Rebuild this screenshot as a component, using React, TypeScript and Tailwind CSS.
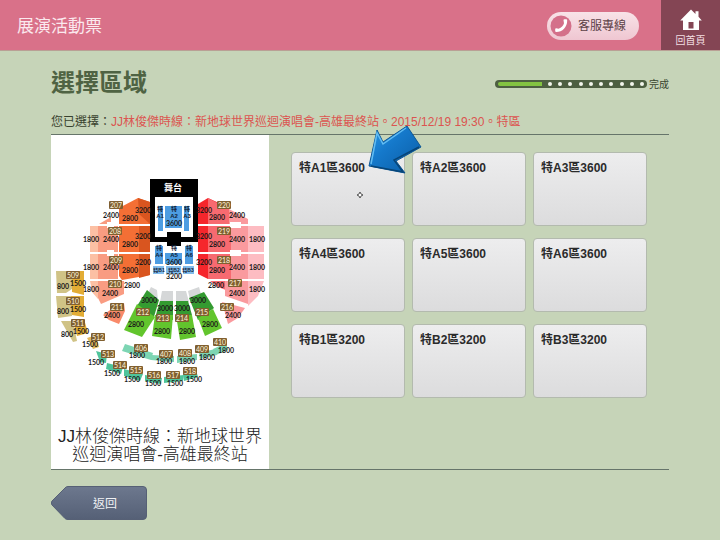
import React from 'react';

type Shape = [fill: string, points: string];
type Label = [text: string, x: number, y: number];

const areas = [
  '特A1區3600', '特A2區3600', '特A3區3600',
  '特A4區3600', '特A5區3600', '特A6區3600',
  '特B1區3200', '特B2區3200', '特B3區3200',
];

const shapes: Shape[] = [
  // left stands
  ['#f46f35', '119,208 138,198 150,202 150,224 119,224'],
  ['#d9551f', '138,198 150,202 150,224 139,214'],
  ['#f79a80', '99,224 111,217 111,224'],
  ['#fcc0a4', '90,226 98,226 98,252 90,252'],
  ['#f99c82', '98,226 118,226 118,252 98,252'],
  ['#f46f35', '119,226 150,226 150,252 119,252'],
  ['#d9551f', '139,226 150,226 150,252 139,252'],
  ['#fcc0a4', '90,254 98,254 98,279 90,279'],
  ['#f99c82', '98,254 118,254 118,279 98,279'],
  ['#f46f35', '119,254 150,254 150,275 122,280 119,276'],
  ['#d9551f', '139,254 150,254 150,275 139,278'],
  ['#fcc0a4', '90,281 98,281 98,299 92,292'],
  ['#f99c82', '98,281 124,281 124,294 101,304 98,298'],
  ['#f98a6a', '103,315 113,308 124,303 125,311 119,324 109,320'],
  // right stands
  ['#f5262c', '198,204 208,198 219,203 219,224 198,224'],
  ['#f76a70', '208,198 229,209 229,224 208,224'],
  ['#fa9a9e', '229,209 248,219 248,224 229,224'],
  ['#f5262c', '198,226 208,226 208,252 198,252'],
  ['#f76a70', '208,226 231,226 231,252 208,252'],
  ['#fa9a9e', '231,226 248,226 248,252 231,252'],
  ['#fdbcc2', '248,226 264,226 264,252 248,252'],
  ['#f5262c', '198,254 208,254 208,279 198,274'],
  ['#f76a70', '208,254 231,254 231,279 208,279'],
  ['#fa9a9e', '231,254 248,254 248,279 231,279'],
  ['#fdbcc2', '248,254 264,254 264,279 248,279'],
  ['#f76a70', '210,281 231,281 231,292 218,287'],
  ['#fa9a9e', '225,281 248,281 248,304 225,296'],
  ['#fdbcc2', '248,281 264,281 258,296 248,306'],
  ['#fa9a9e', '222,302 245,308 238,318 228,324'],
  ['#ffffff', '230,222 241,222 241,228 230,228'],
  ['#ffffff', '230,250 241,250 241,256 230,256'],
  ['#ffffff', '107,222 114,222 114,228 107,228'],
  ['#ffffff', '107,250 114,250 114,256 107,256'],
  // far left blocks
  ['#d0c386', '56,271 72,271 72,289 66,293 57,293'],
  ['#e3ad35', '72,271 84,271 84,295 72,292'],
  ['#d0c386', '56,296 72,296 72,316 58,318'],
  ['#e3ad35', '71,296 84,296 84,317 72,315'],
  ['#d0c386', '61,321 73,321 77,341 73,342'],
  ['#e3ad35', '73,321 84,319 88,333 77,336'],
  ['#e3b95a', '87,338 96,335 99,347 93,349'],
  // lower green fan
  ['#d5d7d8', '151,287 157,290 158,301 147,295'],
  ['#349b31', '147,290 159,300 153,320 137,306'],
  ['#62c52d', '137,304 155,317 142,337 124,330'],
  ['#d5d7d8', '162,291 173,291 173,302 160,302'],
  ['#349b31', '160,301 173,301 173,320 155,318'],
  ['#62c52d', '155,315 173,315 171,339 152,336'],
  ['#d5d7d8', '176,291 186,291 189,302 176,302'],
  ['#349b31', '176,301 188,301 192,315 176,318'],
  ['#62c52d', '176,315 192,315 196,337 180,340'],
  ['#d5d7d8', '188,291 199,287 201,294 190,300'],
  ['#349b31', '189,298 204,292 214,308 198,320'],
  ['#62c52d', '198,318 213,309 222,328 205,336'],
  // lower rings
  ['#7dd5b3', '125,344 153,353 151,360 122,351'],
  ['#7dd5b3', '151,355 174,356 174,362 151,360'],
  ['#7dd5b3', '177,356 197,354 197,360 177,363'],
  ['#7dd5b3', '199,353 215,349 217,355 200,359'],
  ['#7dd5b3', '213,349 226,343 228,350 216,355'],
  ['#4fc49b', '96,351 107,354 106,363 100,362'],
  ['#4fc49b', '107,363 123,367 121,374 106,369'],
  ['#4fc49b', '124,369 143,374 140,381 124,376'],
  ['#4fc49b', '145,375 162,378 161,384 145,381'],
  ['#4fc49b', '164,377 184,375 183,381 164,383'],
  ['#4fc49b', '183,373 196,370 198,377 184,381'],
];

const seats: Shape[] = [
  ['#4d9de2', '158,206 163,206 163,231 158,231'],
  ['#4d9de2', '165,206 182,206 182,228 165,228'],
  ['#4d9de2', '184,206 189,206 189,231 184,231'],
  ['#4d9de2', '155,246 163,246 163,264 155,264'],
  ['#4d9de2', '165,253 182,253 182,264 165,264'],
  ['#4d9de2', '185,246 193,246 193,264 185,264'],
  ['#82bdec', '153,266 164,266 164,274 153,274'],
  ['#82bdec', '166,266 181,266 181,274 166,274'],
  ['#82bdec', '183,266 194,266 194,274 183,274'],
];

const prices: Label[] = [
  ['2400', 111, 218], ['3200', 143, 213], ['2800', 130, 221],
  ['1800', 91, 242], ['2400', 111, 242], ['3200', 143, 239], ['2800', 130, 247],
  ['1800', 91, 270], ['2400', 111, 270], ['3200', 143, 265], ['2800', 130, 273],
  ['1800', 91, 292], ['2400', 110, 296], ['2800', 132, 288], ['2400', 112, 318],
  ['3200', 204, 213], ['2800', 217, 220], ['2400', 237, 218],
  ['3200', 204, 239], ['2800', 217, 247], ['2400', 237, 242], ['1800', 257, 242],
  ['3200', 204, 265], ['2800', 217, 273], ['2400', 237, 270], ['1800', 257, 270],
  ['2800', 216, 288], ['2400', 237, 296], ['1800', 257, 292], ['2400', 233, 318],
  ['3600', 174, 226], ['3600', 174, 265], ['3200', 174, 279],
  ['800', 63, 289], ['1500', 78, 286], ['800', 63, 314], ['1500', 78, 312],
  ['800', 67, 337], ['1500', 81, 334], ['1500', 90, 347],
  ['3000', 149, 303], ['3000', 165, 311], ['3000', 182, 311], ['3000', 198, 303],
  ['2800', 136, 327], ['2800', 162, 334], ['2800', 187, 334], ['2800', 210, 327],
  ['1800', 137, 358], ['1800', 164, 364], ['1800', 187, 364], ['1800', 207, 360], ['1800', 226, 353],
  ['1500', 96, 365], ['1500', 112, 376], ['1500', 132, 382],
  ['1500', 153, 386], ['1500', 175, 386], ['1500', 194, 382],
];

const badges: Label[] = [
  ['207', 116, 205], ['208', 115, 231], ['209', 116, 260], ['210', 115, 284], ['211', 117, 307],
  ['220', 224, 205], ['219', 224, 231], ['218', 224, 260], ['217', 235, 283], ['216', 227, 307],
  ['509', 73, 275], ['510', 73, 301], ['511', 78, 323], ['512', 98, 337],
  ['212', 143, 312], ['213', 163, 318], ['214', 182, 318], ['215', 202, 312],
  ['406', 141, 348], ['407', 166, 354], ['408', 185, 353], ['409', 202, 349], ['410', 220, 342],
  ['513', 108, 354], ['514', 120, 365], ['515', 136, 370],
  ['516', 154, 375], ['517', 173, 375], ['518', 190, 371],
];

const zones: Label[] = [
  ['A1', 160, 215], ['A2', 174, 215], ['A3', 187, 215],
  ['A4', 159, 254], ['A5', 174, 254], ['A6', 189, 254],
];

function SeatMap() {
  return (
    <svg viewBox="51 135 218 290" className="block w-full" role="img" aria-label="座位圖" textAnchor="middle">
      {shapes.map(([fill, points]) => <polygon key={points} fill={fill} points={points} />)}
      <path fill="#000" fillRule="evenodd" d="M150 179h48v63h-48zM155 197v40h38v-40z" />
      <rect x="167" y="232" width="14" height="14" />
      {seats.map(([fill, points]) => <polygon key={points} fill={fill} points={points} />)}
      <text x="173" y="191" fill="#fff" className="text-[9px] font-bold">舞台</text>
      <g className="text-[6px] font-bold" fill="#122238">
        {zones.map(([t, x, y]) => (
          <React.Fragment key={t}>
            <text x={x} y={y - 4}>特</text>
            <text x={x} y={y + 3}>{t}</text>
          </React.Fragment>
        ))}
      </g>
      <g className="text-[5px] font-bold" fill="#122238">
        <text x="159" y="272">特B1</text>
        <text x="174" y="272">特B2</text>
        <text x="188" y="272">特B3</text>
      </g>
      <g className="font-['Lato',sans-serif] text-[7px] font-bold" fill="#1c1a1a">
        {prices.map(([t, x, y]) => <text key={`${x}-${y}`} x={x} y={y}>{t}</text>)}
      </g>
      <g className="font-['Lato',sans-serif] text-[7px]" fill="#fff4dc">
        {badges.map(([t, x, y]) => (
          <React.Fragment key={t}>
            <rect x={x - 7} y={y - 4} width="14" height="8" rx="1" fill="#805f30" />
            <text x={x} y={y + 3}>{t}</text>
          </React.Fragment>
        ))}
      </g>
    </svg>
  );
}

function Progress() {
  return (
    <div className="flex items-center gap-0.5 pt-0.5 text-[10px] text-[#39452f]">
      <div className="flex h-2 w-[152px] items-center justify-between rounded-full bg-[#4d5f41] px-[3px]">
        <span className="h-1 w-11 rounded-l-full bg-[#83c341]" />
        <span className="flex w-24 justify-between">
          {Array.from({ length: 10 }, (_, i) => (
            <span key={i} className="size-1 rounded-full bg-[#f2f6ec]" />
          ))}
        </span>
      </div>
      <span>完成</span>
    </div>
  );
}

export default function App() {
  return (
    <div className="min-h-screen bg-[#c6d4b8] font-['Liberation_Sans','Noto_Sans_CJK_TC',sans-serif]">
      <header className="flex h-[51px] items-stretch border-b border-[#b9a095] bg-[#d97189] pl-[17px]">
        <div className="flex flex-1 items-center pt-1 text-[17px] text-[#fbe9ee]">展演活動票</div>
        <button className="mt-3 mr-[22px] flex h-7 w-[92px] items-center gap-1.5 rounded-full bg-linear-to-b from-[#f8e3e8] to-[#efc6d1] pl-[3px] text-[12px] text-[#5c4147]">
          <svg viewBox="0 0 22 22" className="size-[22px]" aria-hidden="true">
            <circle cx="11" cy="11" r="10.5" fill="#d4708a" />
            <path d="M13.500 5.200Q13.500 4.300 14.400 4.300H16.200Q17.200 4.300 17.200 5.400C17.200 12 12.500 17 6.200 17Q5.200 17 5.200 16V14.200Q5.200 13.300 6.100 13.300L8.600 13.700C11.500 12.700 13.300 10.700 14 8.200z" fill="#fff" />
          </svg>
          客服專線
        </button>
        <button className="flex w-[59px] flex-col items-center bg-[#844554] pt-[9px] text-[10px] leading-4 text-[#f3dfe3]">
          <svg viewBox="0 0 22 22" className="size-[22px]" aria-hidden="true">
            <path fill="#fff" fillRule="evenodd" d="M11 .5 15.500 5V2.300h3v5.500l3.300 3.700H19V21H3v-9.500H.2zM8.500 13v6.500h5V13z" />
          </svg>
          <span className="pt-0.5">回首頁</span>
        </button>
      </header>

      <main className="px-[51px] pt-[18px]">
        <div className="flex items-center justify-between">
          <h1 className="text-[24px] leading-7 font-bold text-[#4f6343]">選擇區域</h1>
          <Progress />
        </div>
        <p className="mt-4 pb-[3px] text-[12px] leading-[18px] text-[#39422f]">
          您已選擇：<span className="text-[#dc5450]">JJ林俊傑時線：新地球世界巡迴演唱會-高雄最終站。2015/12/19 19:30。特區</span>
        </p>

        <section className="relative flex border-y border-[#66756a]">
          <figure className="w-[218px] shrink-0 bg-white pb-[5px]">
            <SeatMap />
            <figcaption className="px-1 pt-[3px] text-center text-[17px] leading-[18px] font-light text-[#222]">
              JJ林俊傑時線：新地球世界<br />巡迴演唱會-高雄最終站
            </figcaption>
          </figure>
          <div className="grid flex-1 auto-rows-[74px] grid-cols-3 gap-x-[7px] gap-y-3 px-[22px] pt-[17px]">
            {areas.map((name) => (
              <button
                key={name}
                className="flex items-start rounded-[4px] border border-[#b3baae] bg-linear-to-b from-[#ededee] to-[#dcdcdd] px-[7px] pt-[6px] text-[12px] leading-[18px] font-bold text-[#2b2b2b]"
              >
                {name}
              </button>
            ))}
          </div>

          {/* pointer overlay on the first area */}
          <svg viewBox="366 122 58 54" className="pointer-events-none absolute -top-[13px] left-[315px] h-[54px] w-[58px]" aria-hidden="true">
            <defs>
              <linearGradient id="arrow" x1="0" y1="0" x2="1" y2="1">
                <stop offset="0" stopColor="#2d9ae6" />
                <stop offset="0.4" stopColor="#1579cb" />
                <stop offset="1" stopColor="#0a5ba3" />
              </linearGradient>
            </defs>
            <polygon points="369,166 377,130 383,142 407,126 421,147 396,161 405,173" fill="url(#arrow)" stroke="#0d5795" strokeLinejoin="round" />
            <path d="M371 164 377 133 383 144 406 128" fill="none" stroke="#62bdf3" strokeWidth="1.500" />
            <path d="M371 166 403 172 394 160 419 147" fill="none" stroke="#074578" strokeWidth="1.500" />
          </svg>
          <svg viewBox="0 0 8 8" className="pointer-events-none absolute top-[56px] left-[305px] size-2" aria-hidden="true">
            <path d="M4 1 5 3 7 4 5 5 4 7 3 5 1 4 3 3z" fill="#fff" stroke="#333" strokeWidth="0.800" />
          </svg>
        </section>

        <button className="relative mt-4 flex h-[34px] w-24 items-center justify-center pt-0.5 pl-3 text-[12px] text-[#f0f1f4]">
          <svg viewBox="0 0 96 34" className="absolute inset-0 size-full" aria-hidden="true">
            <defs>
              <linearGradient id="back" x1="0" y1="0" x2="0" y2="1">
                <stop offset="0" stopColor="#6d788e" />
                <stop offset="1" stopColor="#556076" />
              </linearGradient>
            </defs>
            <path d="M17 .5H92q3.500 0 3.500 3.500V30q0 3.500-3.500 3.500H17q-2 0-3-1L1 19q-1.500-2 0-4L14 2q1-1.500 3-1.500z" fill="url(#back)" stroke="#566075" />
          </svg>
          <span className="relative">返回</span>
        </button>
      </main>
    </div>
  );
}
